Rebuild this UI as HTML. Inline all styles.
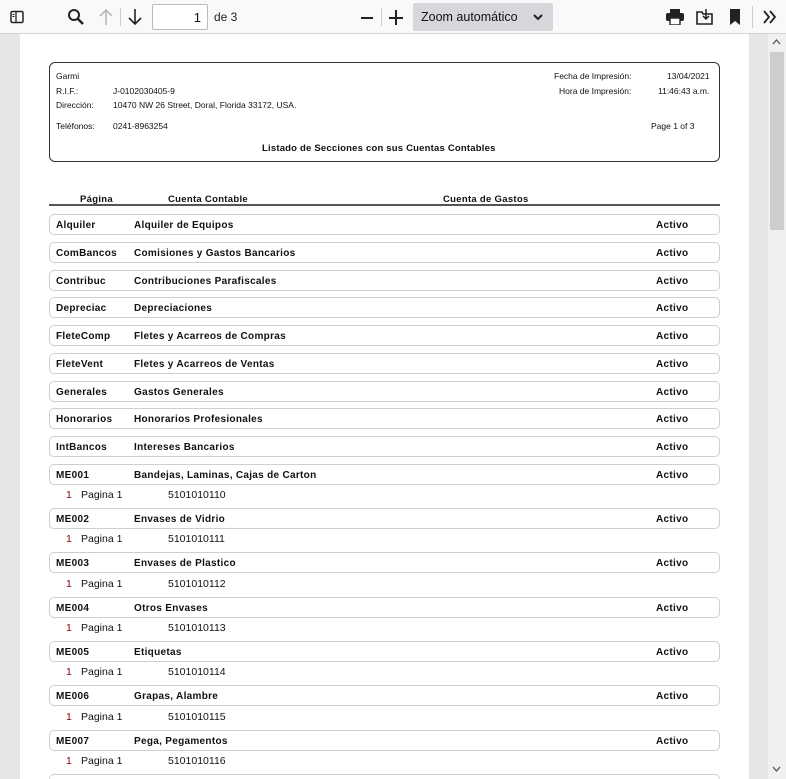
<!DOCTYPE html>
<html style="overflow:hidden;width:786px;height:779px"><head><meta charset="utf-8">
<style>
*{margin:0;padding:0;box-sizing:border-box}
body{width:786px;height:779px;overflow:hidden;background:#e6e6e8;font-family:"Liberation Sans",Arial,sans-serif;position:relative}
.tb{position:absolute;left:0;top:0;width:786px;height:34px;background:#f9f9fa;border-bottom:1px solid #d4d4d6}
.a{position:absolute}
.page{position:absolute;left:20px;top:34px;width:729px;height:745px;background:#fff}
.sb{position:absolute;left:768px;top:34px;width:18px;height:745px;background:#f0f0f0}
.thumb{position:absolute;left:770px;top:52px;width:14px;height:178px;background:#cdcdcd}
.h{font-size:8.5px;color:#111;position:absolute}
.box{position:absolute;left:49px;width:671px;height:21px;border:1px solid #cfcfcf;border-radius:5px}
.b{font-weight:bold;font-size:10px;color:#111;position:absolute;letter-spacing:0.3px}
.d{font-size:10.5px;color:#111;position:absolute}
.r{color:#8b0000}
</style></head><body>
<div class="tb">
 <svg class="a" style="left:10px;top:10px" width="14" height="14" viewBox="0 0 14 14"><rect x="1" y="1.5" width="12" height="11" rx="1.5" fill="none" stroke="#222" stroke-width="1.5"/><line x1="6" y1="2" x2="6" y2="12" stroke="#222" stroke-width="1.3"/><line x1="2.5" y1="4.5" x2="4.5" y2="4.5" stroke="#222"/><line x1="2.5" y1="6.5" x2="4.5" y2="6.5" stroke="#222"/></svg>
 <svg class="a" style="left:67px;top:8px" width="18" height="18" viewBox="0 0 18 18"><circle cx="7" cy="7" r="5" fill="none" stroke="#222" stroke-width="2"/><line x1="10.5" y1="10.5" x2="16" y2="16" stroke="#222" stroke-width="2.4"/></svg>
 <svg class="a" style="left:98px;top:8px" width="16" height="18" viewBox="0 0 16 18"><path d="M8 2V17M2 8L8 2L14 8" fill="none" stroke="#b8b8b8" stroke-width="1.6"/></svg>
 <div class="a" style="left:120px;top:8px;width:1px;height:18px;background:#ccc"></div>
 <svg class="a" style="left:127px;top:8px" width="16" height="18" viewBox="0 0 16 18"><path d="M8 1V16M2 10L8 16L14 10" fill="none" stroke="#222" stroke-width="1.6"/></svg>
 <div class="a" style="left:152px;top:4px;width:56px;height:26px;background:#fff;border:1px solid #bbb;border-radius:2px;font-size:13px;text-align:right;padding:5px 6px 0 0;color:#111">1</div>
 <div class="a" style="left:214px;top:10px;font-size:12px;color:#222">de 3</div>
 <div class="a" style="left:361px;top:17px;width:12px;height:1.6px;background:#222"></div>
 <div class="a" style="left:381px;top:8px;width:1px;height:18px;background:#ccc"></div>
 <div class="a" style="left:389px;top:17px;width:14px;height:1.6px;background:#222"></div>
 <div class="a" style="left:395px;top:10px;width:1.6px;height:15px;background:#222"></div>
 <div class="a" style="left:413px;top:3px;width:140px;height:28px;background:#d7d7db;border-radius:2px;font-size:12.5px;color:#111;padding:7px 0 0 8px">Zoom automático</div>
 <svg class="a" style="left:533px;top:13px" width="10" height="8" viewBox="0 0 10 8"><path d="M1 2L5 6L9 2" fill="none" stroke="#222" stroke-width="2"/></svg>
 <svg class="a" style="left:666px;top:9px" width="18" height="16" viewBox="0 0 18 16"><rect x="4" y="0" width="10" height="4" fill="#222"/><rect x="0" y="4" width="18" height="8" rx="2" fill="#222"/><rect x="4" y="9" width="10" height="7" fill="#fff" stroke="#222" stroke-width="1.4"/></svg>
 <svg class="a" style="left:696px;top:8px" width="18" height="18" viewBox="0 0 18 18"><path d="M1 4H6L7 6H16V16H1Z" fill="none" stroke="#222" stroke-width="1.6"/><path d="M10 1V11M7 8L10 11L13 8" fill="none" stroke="#222" stroke-width="1.5"/></svg>
 <svg class="a" style="left:729px;top:9px" width="12" height="17" viewBox="0 0 12 17"><path d="M1 0H11V16L6 12L1 16Z" fill="#222"/></svg>
 <div class="a" style="left:752px;top:6px;width:1px;height:22px;background:#ccc"></div>
 <svg class="a" style="left:762px;top:10px" width="16" height="14" viewBox="0 0 16 14"><path d="M2 1L7 7L2 13M8 1L13 7L8 13" fill="none" stroke="#222" stroke-width="1.8"/></svg>
</div>
<div class="page"></div>
<div class="sb"></div><div class="thumb"></div>
<svg class="a" style="left:772px;top:39px" width="9" height="6" viewBox="0 0 9 6"><path d="M1 5L4.5 1L8 5" fill="none" stroke="#555" stroke-width="1.3"/></svg>
<svg class="a" style="left:772px;top:766px" width="9" height="6" viewBox="0 0 9 6"><path d="M1 1L4.5 5L8 1" fill="none" stroke="#555" stroke-width="1.3"/></svg>

<div class="a" style="left:49px;top:62px;width:671px;height:100px;border:1.5px solid #333;border-radius:6px"></div>
<div class="h" style="left:56px;top:71px">Garmi</div>
<div class="h" style="left:56px;top:86px">R.I.F.:</div><div class="h" style="left:113px;top:86px">J-0102030405-9</div>
<div class="h" style="left:56px;top:100px">Dirección:</div><div class="h" style="left:113px;top:100px">10470 NW 26 Street, Doral, Florida 33172, USA.</div>
<div class="h" style="left:56px;top:121px">Teléfonos:</div><div class="h" style="left:113px;top:121px">0241-8963254</div>
<div class="h" style="left:554px;top:71px">Fecha de Impresión:</div><div class="h" style="left:667px;top:71px">13/04/2021</div>
<div class="h" style="left:559px;top:86px">Hora de Impresión:</div><div class="h" style="left:658px;top:86px">11:46:43 a.m.</div>
<div class="h" style="left:651px;top:121px">Page 1 of 3</div>
<div class="b" style="left:262px;top:143px;font-size:9.5px;letter-spacing:0.2px">Listado de Secciones con sus Cuentas Contables</div>

<div class="b" style="left:80px;top:194px;font-size:9.5px">Página</div>
<div class="b" style="left:168px;top:194px;font-size:9.5px">Cuenta Contable</div>
<div class="b" style="left:443px;top:194px;font-size:9.5px">Cuenta de Gastos</div>
<div class="a" style="left:49px;top:204px;width:671px;height:1.5px;background:#555"></div>

<div class="box" style="top:214px"></div><div class="b" style="left:56px;top:220px">Alquiler</div><div class="b" style="left:134px;top:220px">Alquiler de Equipos</div><div class="b" style="left:656px;top:220px">Activo</div>
<div class="box" style="top:242px"></div><div class="b" style="left:56px;top:248px">ComBancos</div><div class="b" style="left:134px;top:248px">Comisiones y Gastos Bancarios</div><div class="b" style="left:656px;top:248px">Activo</div>
<div class="box" style="top:270px"></div><div class="b" style="left:56px;top:276px">Contribuc</div><div class="b" style="left:134px;top:276px">Contribuciones Parafiscales</div><div class="b" style="left:656px;top:276px">Activo</div>
<div class="box" style="top:297px"></div><div class="b" style="left:56px;top:303px">Depreciac</div><div class="b" style="left:134px;top:303px">Depreciaciones</div><div class="b" style="left:656px;top:303px">Activo</div>
<div class="box" style="top:325px"></div><div class="b" style="left:56px;top:331px">FleteComp</div><div class="b" style="left:134px;top:331px">Fletes y Acarreos de Compras</div><div class="b" style="left:656px;top:331px">Activo</div>
<div class="box" style="top:353px"></div><div class="b" style="left:56px;top:359px">FleteVent</div><div class="b" style="left:134px;top:359px">Fletes y Acarreos de Ventas</div><div class="b" style="left:656px;top:359px">Activo</div>
<div class="box" style="top:381px"></div><div class="b" style="left:56px;top:387px">Generales</div><div class="b" style="left:134px;top:387px">Gastos Generales</div><div class="b" style="left:656px;top:387px">Activo</div>
<div class="box" style="top:408px"></div><div class="b" style="left:56px;top:414px">Honorarios</div><div class="b" style="left:134px;top:414px">Honorarios Profesionales</div><div class="b" style="left:656px;top:414px">Activo</div>
<div class="box" style="top:436px"></div><div class="b" style="left:56px;top:442px">IntBancos</div><div class="b" style="left:134px;top:442px">Intereses Bancarios</div><div class="b" style="left:656px;top:442px">Activo</div>

<div class="box" style="top:464px"></div><div class="b" style="left:56px;top:470px">ME001</div><div class="b" style="left:134px;top:470px">Bandejas, Laminas, Cajas de Carton</div><div class="b" style="left:656px;top:470px">Activo</div>
<div class="d" style="left:66px;top:489px"><span class="r">1</span></div><div class="d" style="left:81px;top:489px">Pagina 1</div><div class="d" style="left:168px;top:489px">5101010110</div>
<div class="box" style="top:508px"></div><div class="b" style="left:56px;top:514px">ME002</div><div class="b" style="left:134px;top:514px">Envases de Vidrio</div><div class="b" style="left:656px;top:514px">Activo</div>
<div class="d" style="left:66px;top:533px"><span class="r">1</span></div><div class="d" style="left:81px;top:533px">Pagina 1</div><div class="d" style="left:168px;top:533px">5101010111</div>
<div class="box" style="top:552px"></div><div class="b" style="left:56px;top:558px">ME003</div><div class="b" style="left:134px;top:558px">Envases de Plastico</div><div class="b" style="left:656px;top:558px">Activo</div>
<div class="d" style="left:66px;top:578px"><span class="r">1</span></div><div class="d" style="left:81px;top:578px">Pagina 1</div><div class="d" style="left:168px;top:578px">5101010112</div>
<div class="box" style="top:597px"></div><div class="b" style="left:56px;top:603px">ME004</div><div class="b" style="left:134px;top:603px">Otros Envases</div><div class="b" style="left:656px;top:603px">Activo</div>
<div class="d" style="left:66px;top:622px"><span class="r">1</span></div><div class="d" style="left:81px;top:622px">Pagina 1</div><div class="d" style="left:168px;top:622px">5101010113</div>
<div class="box" style="top:641px"></div><div class="b" style="left:56px;top:647px">ME005</div><div class="b" style="left:134px;top:647px">Etiquetas</div><div class="b" style="left:656px;top:647px">Activo</div>
<div class="d" style="left:66px;top:666px"><span class="r">1</span></div><div class="d" style="left:81px;top:666px">Pagina 1</div><div class="d" style="left:168px;top:666px">5101010114</div>
<div class="box" style="top:685px"></div><div class="b" style="left:56px;top:691px">ME006</div><div class="b" style="left:134px;top:691px">Grapas, Alambre</div><div class="b" style="left:656px;top:691px">Activo</div>
<div class="d" style="left:66px;top:711px"><span class="r">1</span></div><div class="d" style="left:81px;top:711px">Pagina 1</div><div class="d" style="left:168px;top:711px">5101010115</div>
<div class="box" style="top:730px"></div><div class="b" style="left:56px;top:736px">ME007</div><div class="b" style="left:134px;top:736px">Pega, Pegamentos</div><div class="b" style="left:656px;top:736px">Activo</div>
<div class="d" style="left:66px;top:755px"><span class="r">1</span></div><div class="d" style="left:81px;top:755px">Pagina 1</div><div class="d" style="left:168px;top:755px">5101010116</div>
<div class="box" style="top:774px;height:5px;border-bottom:none;border-radius:5px 5px 0 0"></div>
</body></html>
